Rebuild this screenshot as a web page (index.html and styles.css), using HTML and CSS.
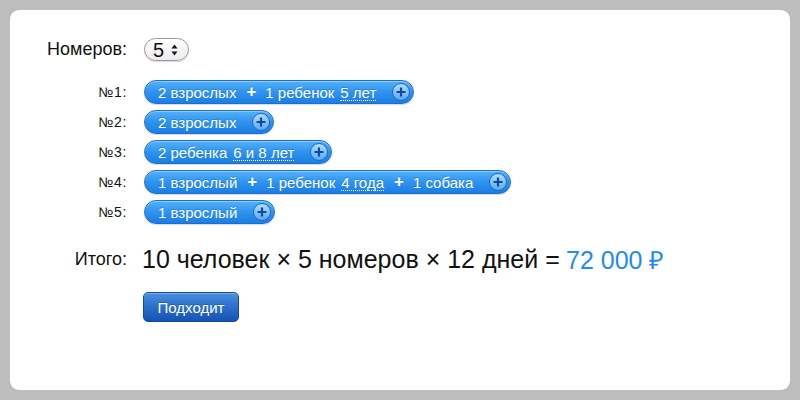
FILE: index.html
```html
<!DOCTYPE html>
<html lang="ru">
<head>
<meta charset="utf-8">
<link rel="stylesheet" href="styles.css">
</head>
<body>
<div class="card">
  <div class="row row-rooms">
    <div class="label label-big">Номеров:</div>
    <div class="content">
      <div class="select"><span class="select-val">5</span><span class="arrows"><svg width="7" height="12" viewBox="0 0 7 12"><path d="M3.5 0.5 L6.5 4.5 L0.5 4.5 Z M3.5 11.5 L6.5 7.5 L0.5 7.5 Z" fill="#111"/></svg></span></div>
    </div>
  </div>

  <div class="rooms">
    <div class="row">
      <div class="label">№1:</div>
      <div class="content">
        <div class="pill"><span class="seg">2 взрослых</span><span class="plus">+</span><span class="seg">1 ребенок</span><span class="age">5 лет</span><span class="add"><svg width="18" height="18" viewBox="0 0 18 18"><path d="M9 4.5 V13.5 M4.5 9 H13.5" stroke="#0c4c9e" stroke-width="2.2"/></svg></span></div>
      </div>
    </div>
    <div class="row">
      <div class="label">№2:</div>
      <div class="content">
        <div class="pill"><span class="seg">2 взрослых</span><span class="add"><svg width="18" height="18" viewBox="0 0 18 18"><path d="M9 4.5 V13.5 M4.5 9 H13.5" stroke="#0c4c9e" stroke-width="2.2"/></svg></span></div>
      </div>
    </div>
    <div class="row">
      <div class="label">№3:</div>
      <div class="content">
        <div class="pill"><span class="seg">2 ребенка</span><span class="age">6 и 8 лет</span><span class="add"><svg width="18" height="18" viewBox="0 0 18 18"><path d="M9 4.5 V13.5 M4.5 9 H13.5" stroke="#0c4c9e" stroke-width="2.2"/></svg></span></div>
      </div>
    </div>
    <div class="row">
      <div class="label">№4:</div>
      <div class="content">
        <div class="pill"><span class="seg">1 взрослый</span><span class="plus">+</span><span class="seg">1 ребенок</span><span class="age">4 года</span><span class="plus">+</span><span class="seg">1 собака</span><span class="add"><svg width="18" height="18" viewBox="0 0 18 18"><path d="M9 4.5 V13.5 M4.5 9 H13.5" stroke="#0c4c9e" stroke-width="2.2"/></svg></span></div>
      </div>
    </div>
    <div class="row">
      <div class="label">№5:</div>
      <div class="content">
        <div class="pill"><span class="seg">1 взрослый</span><span class="add"><svg width="18" height="18" viewBox="0 0 18 18"><path d="M9 4.5 V13.5 M4.5 9 H13.5" stroke="#0c4c9e" stroke-width="2.2"/></svg></span></div>
      </div>
    </div>
  </div>

  <div class="row row-total">
    <div class="label label-big">Итого:</div>
    <div class="content total">10 человек × 5 номеров × 12 дней = <span class="price">72 000 ₽</span></div>
  </div>

  <div class="row row-btn">
    <div class="label"></div>
    <div class="content"><button class="btn">Подходит</button></div>
  </div>
</div>
</body>
</html>
```

FILE: styles.css
```css
html, body {
  margin: 0;
  padding: 0;
}
body {
  background: #bdbdbd;
  padding: 10px;
  font-family: "Liberation Sans", Arial, sans-serif;
  color: #111;
}
.card {
  background: #fff;
  border-radius: 9px;
  height: 380px;
  box-sizing: border-box;
  padding-top: 28px;
}
.row {
  display: flex;
  align-items: center;
}
.label {
  width: 117px;
  flex: none;
  text-align: right;
  font-size: 14px;
  letter-spacing: 0.6px;
  color: #111;
}
.label-big {
  font-size: 18px;
  letter-spacing: 0;
}
.content {
  margin-left: 17px;
  display: flex;
  align-items: center;
}
.select {
  width: 45px;
  height: 23px;
  box-sizing: border-box;
  border: 1px solid #9a9a9a;
  border-radius: 12px;
  background: linear-gradient(#ffffff, #ececec);
  display: flex;
  align-items: center;
  padding-left: 8px;
  box-shadow: 0 1px 1px rgba(0,0,0,0.15);
}
.select-val {
  font-size: 20px;
  line-height: 1;
}
.arrows {
  margin-left: 7px;
  display: flex;
}
.rooms {
  margin-top: 19px;
  display: flex;
  flex-direction: column;
  gap: 6px;
}
.pill {
  height: 24px;
  box-sizing: border-box;
  border-radius: 12px;
  border: 1px solid #1b6fd0;
  background: linear-gradient(#54b2f8 0%, #2f93ee 50%, #1b7ee4 100%);
  box-shadow: inset 0 1px 0 rgba(255,255,255,0.35), 0 1px 1px rgba(0,0,0,0.15);
  display: flex;
  align-items: center;
  padding-left: 13px;
  padding-right: 3px;
  color: #fff;
  font-size: 15px;
  white-space: nowrap;
  text-shadow: 0 -1px 0 rgba(0,60,140,0.25);
}
.plus {
  font-weight: bold;
  font-size: 17px;
  margin: 0 9px 0 10px;
}
.age {
  margin-left: 6px;
  line-height: 15px;
  border-bottom: 1px dotted #fff;
  margin-top: 2px;
}
.add {
  margin-left: 16px;
  width: 18px;
  height: 18px;
  box-sizing: border-box;
  border-radius: 50%;
  border: 1px solid #1d6bc4;
  background: linear-gradient(#b5dcfb, #5aa9ef);
  display: flex;
  align-items: center;
  justify-content: center;
}
.add svg {
  display: block;
  flex: none;
}
.row-total {
  margin-top: 20px;
  height: 30px;
}
.total {
  margin-left: 15px;
  font-size: 25px;
  color: #111;
  white-space: nowrap;
}
.price {
  color: #1f8bf0;
  margin-left: 0.25em;
}
.row-btn {
  margin-top: 18px;
}
.btn {
  margin-left: -1px;
  width: 96px;
  height: 30px;
  border: 1px solid #1049a3;
  border-radius: 5px;
  background: linear-gradient(#4a90de 0%, #2b6fcc 50%, #1553b3 100%);
  box-shadow: inset 0 1px 0 rgba(255,255,255,0.3);
  color: #fff;
  font-family: "Liberation Sans", Arial, sans-serif;
  font-size: 15px;
  padding: 0;
  text-shadow: 0 -1px 0 rgba(0,40,120,0.3);
}
```
